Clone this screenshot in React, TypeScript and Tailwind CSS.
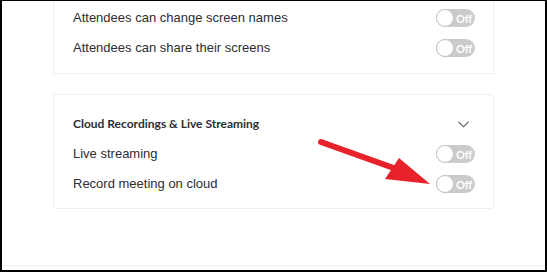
import React from "react";

function Toggle() {
  return (
    <div className="relative w-[39px] h-[18px] rounded-full bg-[#cbcbcb] flex items-center">
      <div className="absolute left-0 top-0 w-[18px] h-[18px] rounded-full bg-white border border-[#c4c4c4]" />
      <span className="absolute left-[20px] text-[11px] leading-none text-white font-bold" style={{ fontFamily: "Lato, sans-serif" }}>Off</span>
    </div>
  );
}

function Row({ label }: { label: string }) {
  return (
    <div className="h-[30px] flex items-center justify-between pl-[19px] pr-[18px]">
      <span className="text-[13px] text-[#2d2d33]">{label}</span>
      <Toggle />
    </div>
  );
}

export default function App() {
  return (
    <div
      className="relative w-[547px] h-[272px] bg-white border-t border-x-2 border-b-2 border-black overflow-hidden"
      style={{ fontFamily: "'Liberation Sans', Arial, sans-serif" }}
    >
      <div className="flex flex-col h-full">
        <div className="ml-[51px] w-[441px] border-x border-b border-[#efeff1] pt-[2px] h-[73px]">
          <Row label="Attendees can change screen names" />
          <Row label="Attendees can share their screens" />
        </div>
        <div className="ml-[51px] mt-[20px] w-[441px] border border-[#efeff1] rounded-[3px] pt-[14px] h-[115px]">
          <div className="h-[30px] flex items-center justify-between pl-[19px] pr-[24px]">
            <span className="text-[12px] font-bold text-[#2d2d33]" style={{ fontFamily: "Lato, sans-serif" }}>
              Cloud Recordings &amp; Live Streaming
            </span>
            <svg width="11" height="7" viewBox="0 0 11 7" fill="none">
              <path d="M0.5 0.8l5 5 5-5" stroke="#555" strokeWidth="1.1" />
            </svg>
          </div>
          <Row label="Live streaming" />
          <Row label="Record meeting on cloud" />
        </div>
        <div className="mt-auto mb-[4px] h-px bg-[#f3eef3]" />
      </div>
      <svg className="absolute left-0 top-0" width="547" height="272" viewBox="0 0 547 272">
        <line x1="319" y1="141" x2="400" y2="170" stroke="#e8222b" strokeWidth="6" strokeLinecap="round" />
        <polygon points="397,157 383,178 428,183" fill="#e8222b" />
      </svg>
    </div>
  );
}
